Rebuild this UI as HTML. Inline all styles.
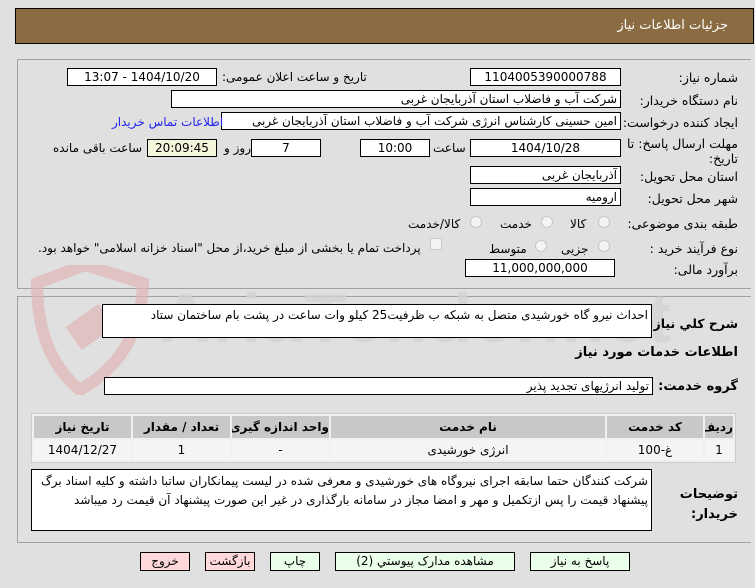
<!DOCTYPE html>
<html><head><meta charset="utf-8"><style>
*{box-sizing:border-box;margin:0;padding:0}
body{width:755px;height:588px;background:#e0e0e0;position:relative;overflow:hidden;font-family:Tahoma,"DejaVu Sans","Liberation Sans",sans-serif;font-size:12px;color:#000;direction:rtl}
.a{position:absolute;white-space:nowrap}
.box{position:absolute;background:#fff;border:1px solid #000;text-align:center;line-height:16px;height:18px;white-space:nowrap;overflow:hidden}
.r{text-align:right;padding-right:3px}
.lbl{position:absolute;white-space:nowrap;right:17px;font-size:12.5px}
.btn{position:absolute;top:552px;height:19px;border:1px solid #000;background:#eaffea;text-align:center;line-height:17px;font-size:12px}
.red{background:#ffd9d9}
.rad{position:absolute;width:12px;height:12px;border-radius:50%;border:1px solid #c8c8c8;background:#f4f4f4}
table{position:absolute;left:31px;top:413px;width:705px;border-collapse:separate;border-spacing:2px;background:#f0f0f0;border:1px solid #ccc;table-layout:fixed}
th{background:#c8c8c8;height:22px;font-weight:bold;font-size:12px;white-space:nowrap;overflow:hidden}
td{background:#f4f4f4;height:20px;text-align:center}
</style></head><body>
<div class="a" style="left:15px;top:8px;width:739px;height:36px;background:#8b6c42;border:1px solid #000"></div>
<div class="a" style="right:27px;top:18px;color:#fff;font-size:13px">جزئیات اطلاعات نیاز</div>

<div class="a" style="left:17px;top:59px;width:734px;height:230px;border:1px solid #a0a0a0;border-right:none"></div>
<div class="a" style="left:17px;top:296px;width:734px;height:247px;border:1px solid #a0a0a0;border-right:none"></div>

<!-- watermark -->
<svg class="a" style="left:25px;top:265px;opacity:.7" width="130" height="130" viewBox="0 0 130 130"><path d="M12 18 L60 0 L118 18 Q116 90 55 125 Q12 90 12 18Z" fill="none" stroke="#e0b6b8" stroke-width="12"/><rect x="45" y="48" width="40" height="28" fill="#e0b6b8" transform="rotate(-35 65 62)"/></svg>
<div class="a" style="left:160px;top:278px;font-size:70px;font-weight:bold;color:#d4d4d4;direction:ltr;letter-spacing:2px;font-family:'Liberation Sans',sans-serif;opacity:.8">AriaTender.net</div>

<div class="lbl" style="top:70px">شماره نیاز:</div>
<div class="box" style="left:470px;top:68px;width:151px">1104005390000788</div>
<div class="a" style="left:222px;top:70px">تاریخ و ساعت اعلان عمومی:</div>
<div class="box" style="left:67px;top:68px;width:150px">1404/10/20 - 13:07</div>

<div class="lbl" style="top:93px">نام دستگاه خریدار:</div>
<div class="box r" style="left:171px;top:90px;width:450px">شرکت آب و فاضلاب استان آذربایجان غربی</div>

<div class="lbl" style="top:115px">ایجاد کننده درخواست:</div>
<div class="box r" style="left:221px;top:112px;width:400px">امین حسینی کارشناس انرژی شرکت آب و فاضلاب استان آذربایجان غربی</div>
<div class="a" style="left:112px;top:115px;color:#2222ee">اطلاعات تماس خریدار</div>

<div class="lbl" style="top:136px;line-height:15px;text-align:right">مهلت ارسال پاسخ: تا<br>تاریخ:</div>
<div class="box" style="left:470px;top:139px;width:151px">1404/10/28</div>
<div class="a" style="left:433px;top:141px">ساعت</div>
<div class="box" style="left:360px;top:139px;width:70px">10:00</div>
<div class="box" style="left:251px;top:139px;width:70px">7</div>
<div class="a" style="left:224px;top:141px">روز و</div>
<div class="box" style="left:147px;top:139px;width:70px;background:#f5f5dc">20:09:45</div>
<div class="a" style="left:53px;top:141px">ساعت باقی مانده</div>

<div class="lbl" style="top:169px">استان محل تحویل:</div>
<div class="box r" style="left:470px;top:166px;width:151px">آذربایجان غربی</div>
<div class="lbl" style="top:191px">شهر محل تحویل:</div>
<div class="box r" style="left:470px;top:188px;width:151px">ارومیه</div>

<div class="lbl" style="top:216px">طبقه بندی موضوعی:</div>
<div class="rad" style="left:598px;top:216px"></div><div class="a" style="left:570px;top:217px">کالا</div>
<div class="rad" style="left:541px;top:216px"></div><div class="a" style="left:500px;top:217px">خدمت</div>
<div class="rad" style="left:470px;top:216px"></div><div class="a" style="left:408px;top:217px">کالا/خدمت</div>

<div class="lbl" style="top:241px">نوع فرآیند خرید :</div>
<div class="rad" style="left:598px;top:240px"></div><div class="a" style="left:561px;top:242px">جزیی</div>
<div class="rad" style="left:535px;top:240px"></div><div class="a" style="left:489px;top:242px">متوسط</div>
<div class="a" style="left:430px;top:238px;width:12px;height:12px;border:1px solid #c8c8c8;background:#f4f4f4"></div>
<div class="a" style="left:38px;top:241px">پرداخت تمام یا بخشی از مبلغ خرید،از محل "اسناد خزانه اسلامی" خواهد بود.</div>

<div class="lbl" style="top:262px">برآورد مالی:</div>
<div class="box" style="left:465px;top:259px;width:150px">11,000,000,000</div>

<div class="lbl" style="top:316px;font-weight:bold">شرح کلي نیاز:</div>
<div class="a" style="left:102px;top:304px;width:550px;height:34px;background:#fff;border:1px solid #000;text-align:right;padding:3px 3px 0 0">احداث نیرو گاه خورشیدی متصل به شبکه ب ظرفیت25 کیلو وات ساعت در پشت بام ساختمان ستاد</div>
<div class="lbl" style="top:345px;font-weight:bold;font-size:13px">اطلاعات خدمات مورد نیاز</div>
<div class="lbl" style="top:379px;font-weight:bold;font-size:13px">گروه خدمت:</div>
<div class="box r" style="left:104px;top:377px;width:549px">تولید انرژیهای تجدید پذیر</div>

<table>
<colgroup><col style="width:28px"><col style="width:96px"><col><col style="width:97px"><col style="width:97px"><col style="width:97px"></colgroup>
<tr><th>ردیف</th><th>کد خدمت</th><th>نام خدمت</th><th>واحد اندازه گیری</th><th>تعداد / مقدار</th><th>تاریخ نیاز</th></tr>
<tr><td>1</td><td>غ-100</td><td>انرژی خورشیدی</td><td>-</td><td>1</td><td>1404/12/27</td></tr>
</table>

<div class="lbl" style="top:485px;font-weight:bold;line-height:20px;text-align:right;font-size:13px">توضیحات<br>خریدار:</div>
<div class="a" style="left:31px;top:469px;width:621px;height:62px;background:#fff;border:1px solid #000;white-space:normal;text-align:right;padding:2px 3px 0 2px;line-height:19px">شرکت کنندگان حتما سابقه اجرای نیروگاه های خورشیدی و معرفی شده در لیست پیمانکاران ساتبا داشته و کلیه اسناد برگ پیشنهاد قیمت را پس ازتکمیل و مهر و امضا مجاز در سامانه بارگذاری در غیر این صورت پیشنهاد آن قیمت رد میباشد</div>

<div class="btn" style="left:530px;width:100px">پاسخ به نیاز</div>
<div class="btn" style="left:335px;width:180px">مشاهده مدارک پیوستي (2)</div>
<div class="btn" style="left:270px;width:50px">چاپ</div>
<div class="btn red" style="left:205px;width:50px">بازگشت</div>
<div class="btn red" style="left:140px;width:50px">خروج</div>
</body></html>
